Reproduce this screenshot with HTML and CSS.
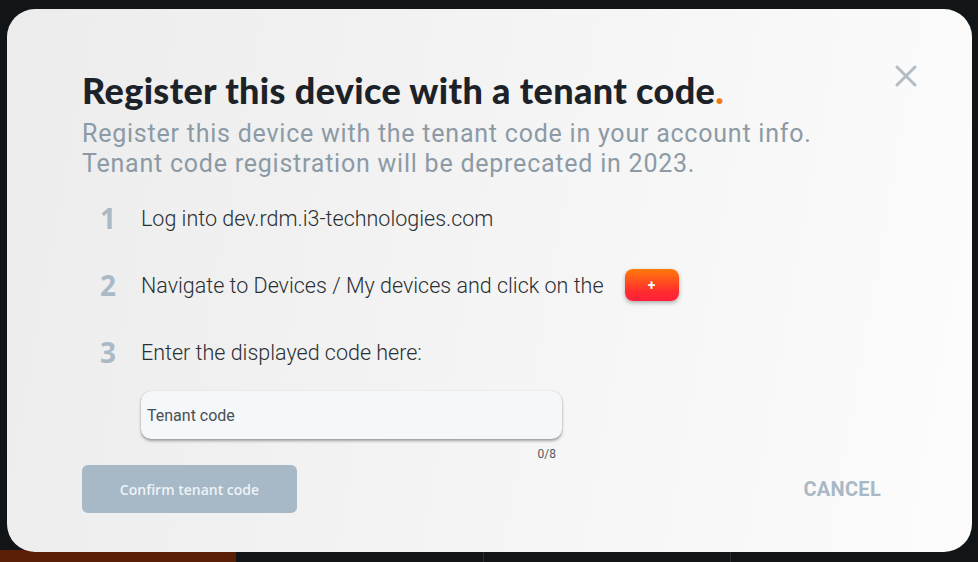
FILE: index.html
```html
<!DOCTYPE html>
<html lang="en">
<head>
<meta charset="utf-8">
<link rel="stylesheet" href="styles.css">
<title>Register device</title>
</head>
<body>
<div class="backdrop">
  <div class="bg-top"></div>
  <div class="bg-bottom">
    <div class="bg-orange"></div>
    <div class="bg-cell"></div>
    <div class="bg-cell"></div>
    <div class="bg-cell"></div>
  </div>
</div>
<div class="dialog">
  <button class="close" aria-label="Close">
    <svg width="22" height="22" viewBox="0 0 22 22"><path d="M2 2 L20 20 M20 2 L2 20" stroke="#b3bcc3" stroke-width="3" stroke-linecap="round"/></svg>
  </button>
  <h1 class="title">Register this device with a tenant code<span class="dot">.</span></h1>
  <p class="subtitle">Register this device with the tenant code in your account info.<br>Tenant code registration will be deprecated in 2023.</p>
  <ol class="steps">
    <li class="step"><span class="num">1</span><span class="text">Log into dev.rdm.i3-technologies.com</span></li>
    <li class="step"><span class="num">2</span><span class="text">Navigate to Devices / My devices and click on the</span><span class="plus">+</span></li>
    <li class="step"><span class="num">3</span><span class="text">Enter the displayed code here:</span></li>
  </ol>
  <div class="field">
    <div class="input">Tenant code</div>
    <div class="counter">0/8</div>
  </div>
  <div class="actions">
    <button class="confirm">Confirm tenant code</button>
    <button class="cancel">CANCEL</button>
  </div>
</div>
</body>
</html>
```
FILE: styles.css
```css
html, body {
  margin: 0;
  padding: 0;
  width: 978px;
  height: 562px;
  overflow: hidden;
  background: #111517;
  font-family: "Roboto", "Liberation Sans", sans-serif;
}
.backdrop {
  width: 978px;
  height: 562px;
  display: flex;
  flex-direction: column;
}
.bg-top { flex: 1; }
.bg-bottom {
  height: 12px;
  display: flex;
}
.bg-orange { width: 235px; background: #5a1e06; }
.bg-cell { flex: 1; border-left: 1px solid #2a2e31; }
.dialog {
  position: absolute;
  left: 7px;
  top: 9px;
  width: 965px;
  height: 543px;
  box-sizing: border-box;
  border-radius: 28px;
  background: linear-gradient(100deg, #ececec 0%, #f3f3f3 45%, #fcfcfc 100%);
  padding: 61px 0 0 75px;
  display: flex;
  flex-direction: column;
}
.close {
  position: absolute;
  right: 55px;
  top: 56px;
  border: 0;
  background: none;
  padding: 0;
  width: 22px;
  height: 22px;
  display: flex;
}
.title {
  margin: 0;
  font-family: "Lato", sans-serif;
  font-weight: 900;
  font-size: 36px;
  line-height: 40px;
  color: #1c2228;
  letter-spacing: 0.35px;
}
.dot { color: #f07a12; }
.subtitle {
  margin: 9px 0 0;
  font-family: "Roboto", sans-serif;
  font-size: 25px;
  line-height: 30px;
  color: #8c9aa5;
  letter-spacing: 0.77px;
}
.steps {
  list-style: none;
  margin: 19px 0 0;
  padding: 0 0 0 18px;
  display: flex;
  flex-direction: column;
  gap: 27px;
}
.step {
  display: flex;
  align-items: center;
  height: 40px;
}
.num {
  width: 41px;
  font-family: "Open Sans", sans-serif;
  font-weight: 700;
  font-size: 28px;
  line-height: 40px;
  color: #a9b9c6;
}
.text {
  font-size: 21.5px;
  font-weight: 300;
  color: #2a2f33;
}
.plus {
  margin-left: 21px;
  width: 54px;
  height: 32px;
  border-radius: 8px;
  background: linear-gradient(180deg, #ff7a0a 0%, #ff2d2d 70%, #ff1f3d 100%);
  box-shadow: 0 2px 4px rgba(0,0,0,0.3);
  color: #fff;
  font-size: 14px;
  font-weight: 700;
  display: flex;
  align-items: center;
  justify-content: center;
}
.field {
  margin: 19px 0 0 59px;
  width: 421px;
  display: flex;
  flex-direction: column;
}
.input {
  height: 48px;
  box-sizing: border-box;
  border-radius: 10px;
  background: #f4f8fb;
  box-shadow: 0 2px 3px rgba(0,0,0,0.35), 0 0 1px rgba(0,0,0,0.2);
  padding: 0 6px;
  display: flex;
  align-items: center;
  font-size: 16px;
  color: #4a4f53;
}
.counter {
  align-self: flex-end;
  margin: 8px 6px 0 0;
  font-size: 12px;
  color: #55595d;
}
.actions {
  margin-top: 4px;
  display: flex;
  align-items: center;
  justify-content: space-between;
  width: 799px;
}
.confirm {
  width: 215px;
  height: 48px;
  border: 0;
  border-radius: 6px;
  background: #a7b8c6;
  color: #eef3f7;
  font-family: "Open Sans", sans-serif;
  font-weight: 600;
  font-size: 14px;
}
.cancel {
  border: 0;
  background: none;
  padding: 0;
  font-family: "Roboto", sans-serif;
  font-weight: 700;
  font-size: 20px;
  color: #a9b8c4;
  letter-spacing: 0.3px;
}
```
